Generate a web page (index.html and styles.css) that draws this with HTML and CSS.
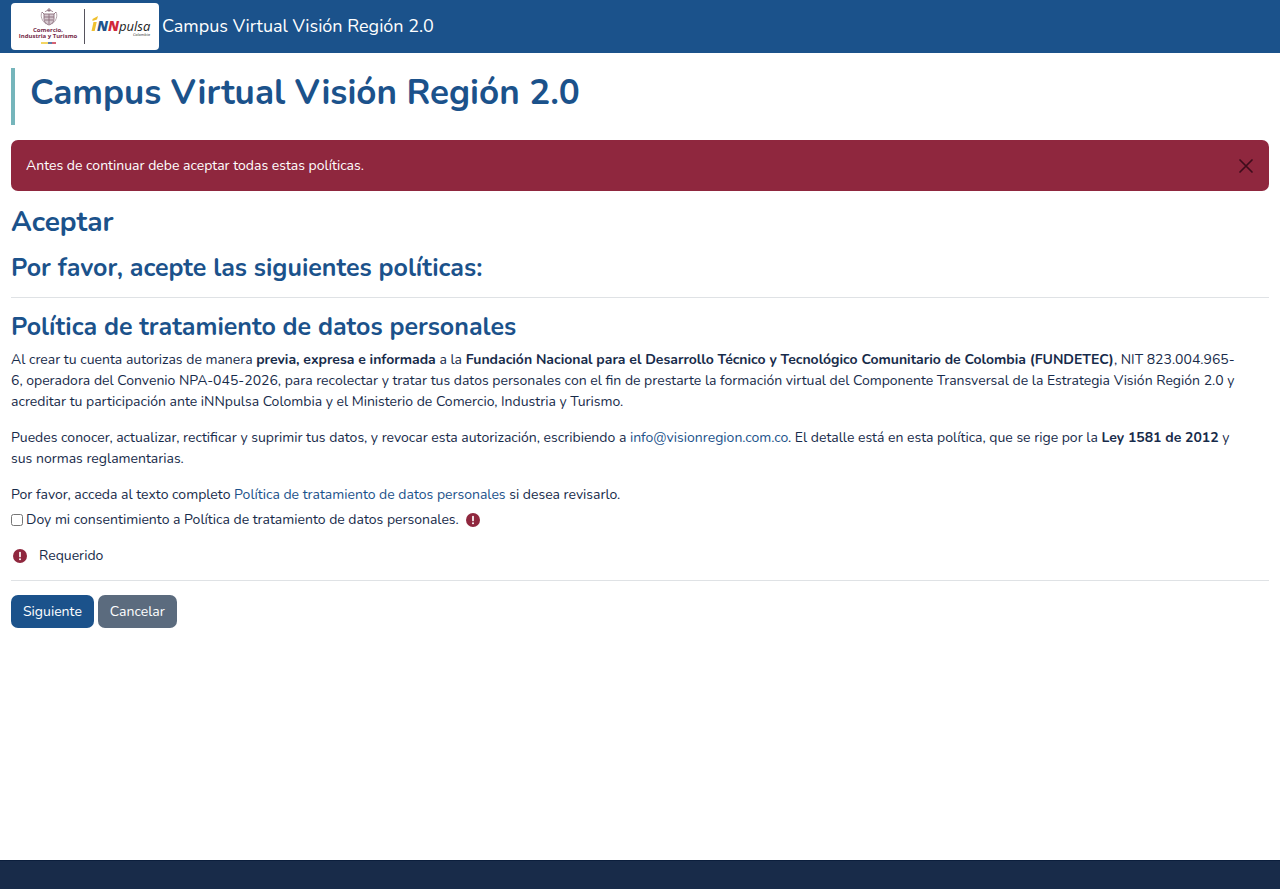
FILE: index.html
```html
<!DOCTYPE html>
<html lang="es">
<head>
    <meta charset="UTF-8">
    <meta name="viewport" content="width=device-width, initial-scale=1.0">
    <title>Campus Virtual Visión Región 2.0</title>
    <link rel="stylesheet" href="styles.css">
</head>
<body>
    <header class="navbar">
        <a class="brand" href="#">
            <svg class="logo" viewBox="0 0 148 47" width="148" height="47" role="img" aria-label="Comercio, Industria y Turismo, iNNpulsa Colombia">
                <rect width="148" height="47" rx="4" fill="#fff"/>
                <!-- escudo -->
                <g fill="none" stroke="#8b6d7c" stroke-width="0.9">
                    <path d="M33 11h10v5c0 3-2 5-5 6-3-1-5-3-5-6z" fill="#d5c8cf"/>
                    <path d="M33 14h10M34 17h8M38 11v10"/>
                    <path d="M31 9c-2 4 0 9 4 12M45 9c2 4 0 9-4 12" stroke="#aa98a2"/>
                    <path d="M34 9c1-2 7-2 8 0M36 7h4M38 5v4M31 9l2 2M45 9l-2 2"/>
                </g>
                <g class="logo-ministry" text-anchor="middle" fill="#762b49">
                    <text x="37" y="29">Comercio,</text>
                    <text x="37" y="35">Industria y Turismo</text>
                </g>
                <path d="M30 40h7" stroke="#f0c92f" stroke-width="1.5"/>
                <path d="M37 40h4" stroke="#27518e" stroke-width="1.5"/>
                <path d="M41 40h4" stroke="#c72e43" stroke-width="1.5"/>
                <path d="M73.500 6v35" stroke="#56535d"/>
                <!-- iNNpulsa -->
                <g class="logo-innpulsa">
                    <path d="M82.500 19h3.200l-2 9h-3.200zM81.500 16l5.500-3-1 3.500-4.500 1.500z" fill="#efc02f"/>
                    <text x="86" y="28" class="logo-bold" fill="#20558c">N</text>
                    <text x="97" y="28" class="logo-bold" fill="#d12739">N</text>
                    <text x="108" y="28" class="logo-name" fill="#222">pulsa</text>
                    <text x="122" y="33" class="logo-small" fill="#333">Colombia</text>
                </g>
            </svg>
            <span>Campus Virtual Visión Región 2.0</span>
        </a>
    </header>

    <main class="page">
        <h1>Campus Virtual Visión Región 2.0</h1>

        <div class="alert" role="alert">
            <span>Antes de continuar debe aceptar todas estas políticas.</span>
            <button type="button" class="close" aria-label="Cerrar">
                <svg viewBox="0 0 16 16" width="16" height="16" aria-hidden="true">
                    <path d="M2 2l12 12M14 2L2 14" fill="none" stroke="currentColor" stroke-width="1.7" stroke-linecap="round"/>
                </svg>
            </button>
        </div>

        <form>
            <h2>Aceptar</h2>
            <h3>Por favor, acepte las siguientes políticas:</h3>
            <hr>
            <h3 class="policy-title">Política de tratamiento de datos personales</h3>
            <p>Al crear tu cuenta autorizas de manera <strong>previa, expresa e informada</strong> a la <strong>Fundación Nacional para el Desarrollo Técnico y Tecnológico Comunitario de Colombia (FUNDETEC)</strong>, NIT 823.004.965-<br>6, operadora del Convenio NPA-045-2026, para recolectar y tratar tus datos personales con el fin de prestarte la formación virtual del Componente Transversal de la Estrategia Visión Región 2.0 y<br>acreditar tu participación ante iNNpulsa Colombia y el Ministerio de Comercio, Industria y Turismo.</p>
            <p>Puedes conocer, actualizar, rectificar y suprimir tus datos, y revocar esta autorización, escribiendo a <a href="mailto:info@visionregion.com.co">info@visionregion.com.co</a>. El detalle está en esta política, que se rige por la <strong>Ley 1581 de 2012</strong> y<br>sus normas reglamentarias.</p>
            <div>Por favor, acceda al texto completo <a href="#">Política de tratamiento de datos personales</a> si desea revisarlo.</div>
            <div class="consent">
                <input type="checkbox" id="consent">
                <label for="consent">Doy mi consentimiento a Política de tratamiento de datos personales.</label>
                <svg class="required" viewBox="0 0 14 14" width="14" height="14" role="img" aria-label="Requerido">
                    <circle cx="7" cy="7" r="7" fill="#8f273e"/>
                    <path d="M7 3.500v4" stroke="#fff" stroke-width="1.7" stroke-linecap="round"/>
                    <circle cx="7" cy="10.200" r="1" fill="#fff"/>
                </svg>
            </div>
            <div class="legend">
                <svg viewBox="0 0 14 14" width="14" height="14" aria-hidden="true">
                    <circle cx="7" cy="7" r="7" fill="#8f273e"/>
                    <path d="M7 3.500v4" stroke="#fff" stroke-width="1.7" stroke-linecap="round"/>
                    <circle cx="7" cy="10.200" r="1" fill="#fff"/>
                </svg>
                <span>Requerido</span>
            </div>
            <hr>
            <div class="actions">
                <button type="submit" class="btn btn-primary">Siguiente</button>
                <button type="button" class="btn btn-secondary">Cancelar</button>
            </div>
        </form>
    </main>

    <footer></footer>
</body>
</html>
```
FILE: styles.css
```css
* {
    box-sizing: border-box;
}
body {
    display: flex;
    flex-direction: column;
    min-height: 100vh;
    margin: 0;
    font-family: Nunito, "Open Sans", sans-serif;
    font-size: 14px;
    line-height: 21px;
    color: #172b4a;
    background-color: #fff;
}
a {
    color: #1b528b;
    text-decoration: none;
}
.navbar {
    padding: 3px 11px;
    background-color: #1b528b;
}
.brand {
    display: flex;
    align-items: center;
    gap: 3px;
    font-size: 18px;
    color: #fff;
}
.logo {
    display: block;
    flex: none;
}
.logo-ministry {
    font-family: "Open Sans", sans-serif;
    font-size: 6px;
    font-weight: 700;
}
.logo-innpulsa {
    font-family: "Open Sans", sans-serif;
    font-style: italic;
}
.logo-bold {
    font-size: 14px;
    font-weight: 800;
}
.logo-name {
    font-size: 13px;
    font-weight: 500;
}
.logo-small {
    font-size: 4px;
}
.page {
    flex: 1;
    padding: 15px 11px;
}
h1, h2, h3 {
    margin: 0;
    font-weight: 700;
    color: #1b528b;
}
h1 {
    padding: 3px 15px 11px;
    margin-bottom: 15px;
    border-left: 4px solid #75b5bb;
    font-size: 35px;
    line-height: 43px;
}
h2 {
    margin-bottom: 14px;
    font-size: 28px;
    line-height: 34px;
}
h3 {
    font-size: 25px;
    line-height: 30px;
}
.policy-title {
    margin-bottom: 7px;
}
hr {
    margin: 14px 0;
    border: 0;
    border-top: 1px solid #dfe2e5;
}
p {
    margin: 0 0 15px;
}
.alert {
    display: flex;
    align-items: center;
    justify-content: space-between;
    padding: 15px;
    margin-bottom: 14px;
    border-radius: 7px;
    color: #fff;
    background-color: #8f273e;
}
.close {
    display: flex;
    padding: 0;
    border: 0;
    color: #3e0c1b;
    background: none;
    cursor: pointer;
}
.consent {
    display: flex;
    align-items: center;
    gap: 3px;
    margin: 4px 0 15px;
}
.consent input {
    width: 12px;
    height: 12px;
    margin: 0;
}
.required {
    margin-left: 4px;
}
.legend {
    display: flex;
    align-items: center;
    gap: 12px;
    padding-left: 2px;
}
.actions {
    display: flex;
    gap: 4px;
}
.btn {
    padding: 6px 12px;
    border: 0;
    border-radius: 7px;
    font: inherit;
    color: #fff;
    cursor: pointer;
}
.btn-primary {
    background-color: #1b528b;
}
.btn-secondary {
    background-color: #5b6b7e;
}
footer {
    height: 29px;
    border-top: 1px solid #0b1e3c;
    background-color: #182b49;
}
```
